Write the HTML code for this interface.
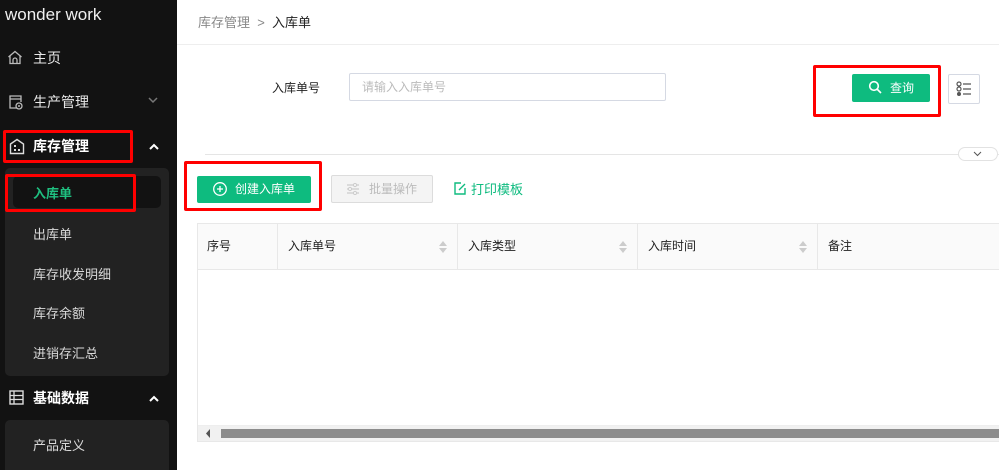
<!DOCTYPE html>
<html><head><meta charset="utf-8"><style>
*{box-sizing:border-box;margin:0;padding:0}
html,body{width:999px;height:470px;overflow:hidden}
body{position:relative;background:#fff;font-family:"Liberation Sans","Noto Sans CJK SC",sans-serif;font-size:13px}
.a{position:absolute}
.side{left:0;top:0;width:177px;height:470px;background:#121212;color:#d9d9d9;overflow:hidden}
.red{position:absolute;border:3px solid #f00;border-radius:2px}
.mi{position:absolute;left:33px;font-size:14px;color:#e8e8e8}
.si{position:absolute;left:33px;font-size:13px;color:#d9d9d9}
.th{position:absolute;top:224px;height:46px;border-left:1px solid #e8e8e8;line-height:45px;padding-left:10px;font-size:12px;color:#222}
.sort{position:absolute;top:17px;width:0;height:0;border-left:4px solid transparent;border-right:4px solid transparent}
</style></head><body>
<div class="a side">
  <div class="a" style="left:5px;top:5px;font-size:17px;color:#f0f0f0">wonder work</div>
  <svg class="a" style="left:7px;top:50px" width="16" height="15" viewBox="0 0 16 15"><path d="M1.5 7L8 1.5 14.5 7M3 5.8V13.5H13V5.8M6 13.5V10a2 2 0 014 0v3.5" fill="none" stroke="#bbb" stroke-width="1.3"/></svg>
  <div class="mi" style="top:48px">主页</div>
  <svg class="a" style="left:8px;top:94px" width="16" height="16" viewBox="0 0 16 16"><path d="M9 14H2V2h11v6M2 5h11" fill="none" stroke="#bbb" stroke-width="1.3"/><circle cx="11" cy="12" r="3" fill="none" stroke="#bbb" stroke-width="1.3"/><circle cx="11" cy="12" r="1" fill="#bbb"/></svg>
  <div class="mi" style="top:92px">生产管理</div>
  <svg class="a" style="left:148px;top:97px" width="10" height="7"><path d="M1 1l4 4 4-4" fill="none" stroke="#777" stroke-width="1.5"/></svg>
  <svg class="a" style="left:9px;top:138px" width="16" height="17" viewBox="0 0 16 17"><path d="M1.5 6L8 1.5 14.5 6V15.5H1.5Z" fill="none" stroke="#ddd" stroke-width="1.4"/><rect x="5" y="7" width="2" height="2" fill="#ddd"/><rect x="5" y="11" width="2" height="2" fill="#ddd"/><rect x="9" y="11" width="2" height="2" fill="#ddd"/></svg>
  <div class="mi" style="top:136px;font-weight:bold;color:#fff">库存管理</div>
  <svg class="a" style="left:149px;top:143px" width="10" height="7"><path d="M1 6l4-4 4 4" fill="none" stroke="#fff" stroke-width="2"/></svg>
  <div class="red" style="left:3px;top:130px;width:130px;height:33px"></div>
  <div class="a" style="left:5px;top:168px;width:164px;height:208px;background:#222;border-radius:5px"></div>
  <div class="a" style="left:13px;top:176px;width:148px;height:32px;background:#121212;border-radius:5px"></div>
  <div class="si" style="top:183px;color:#1fbf80;font-weight:bold">入库单</div>
  <div class="red" style="left:5px;top:174px;width:131px;height:38px"></div>
  <div class="si" style="top:224px">出库单</div>
  <div class="si" style="top:264px">库存收发明细</div>
  <div class="si" style="top:303px">库存余额</div>
  <div class="si" style="top:343px">进销存汇总</div>
  <svg class="a" style="left:9px;top:390px" width="15" height="15" viewBox="0 0 15 15"><rect x="1" y="1" width="13" height="13" fill="none" stroke="#ddd" stroke-width="1.4"/><path d="M1 5.5h13M1 9.5h13M5 1v13" stroke="#ddd" stroke-width="1.3"/></svg>
  <div class="mi" style="top:388px;font-weight:bold;color:#fff">基础数据</div>
  <svg class="a" style="left:149px;top:395px" width="10" height="7"><path d="M1 6l4-4 4 4" fill="none" stroke="#fff" stroke-width="2"/></svg>
  <div class="a" style="left:5px;top:420px;width:164px;height:60px;background:#222;border-radius:5px"></div>
  <div class="si" style="top:435px">产品定义</div>
</div>
<!-- header -->
<div class="a" style="left:177px;top:0;width:822px;height:45px;border-bottom:1px solid #eee"></div>
<div class="a" style="left:198px;top:12px;font-size:13px;color:#888">库存管理 &nbsp;&gt;&nbsp; <span style="color:#222">入库单</span></div>
<div class="a" style="left:272px;top:79px;font-size:12px;color:#222">入库单号</div>
<div class="a" style="left:349px;top:73px;width:317px;height:28px;border:1px solid #d5d9e3;border-radius:2px;padding-left:12px;line-height:26px;font-size:12px;color:#bbb">请输入入库单号</div>
<div class="a" style="left:852px;top:74px;width:78px;height:28px;background:#0ebb7f;border-radius:2px;color:#fff;font-size:12px;line-height:28px;padding-left:38px">查询</div>
<svg class="a" style="left:868px;top:80px" width="14" height="14"><circle cx="6" cy="6" r="4.3" fill="none" stroke="#fff" stroke-width="1.6"/><path d="M9 9l4 4" stroke="#fff" stroke-width="1.6"/></svg>
<div class="red" style="left:813px;top:65px;width:128px;height:52px"></div>
<div class="a" style="left:948px;top:74px;width:32px;height:30px;border:1px solid #d5d9e3;border-radius:2px"></div>
<svg class="a" style="left:956px;top:81px" width="16" height="16"><circle cx="3" cy="3" r="2" fill="none" stroke="#555" stroke-width="1.2"/><circle cx="3" cy="8" r="2" fill="none" stroke="#555" stroke-width="1.2"/><circle cx="3" cy="13" r="2" fill="#555"/><path d="M7 3h8M7 8h8M7 13h8" stroke="#555" stroke-width="1.3"/></svg>
<div class="a" style="left:205px;top:154px;width:794px;height:1px;background:#e5e5e5"></div>
<div class="a" style="left:958px;top:147px;width:40px;height:14px;border:1px solid #e2e2e2;border-radius:7px;background:#fff"></div>
<svg class="a" style="left:973px;top:151px" width="9" height="6"><path d="M1 1l3.5 3.5L8 1" fill="none" stroke="#555" stroke-width="1"/></svg>
<!-- actions -->
<div class="a" style="left:197px;top:176px;width:114px;height:27px;background:#0ebb7f;border-radius:2px;color:#fff;font-size:12px;line-height:27px;padding-left:38px">创建入库单</div>
<svg class="a" style="left:212px;top:181px" width="16" height="16"><circle cx="8" cy="8" r="6.3" fill="none" stroke="#fff" stroke-width="1.3"/><path d="M8 5v6M5 8h6" stroke="#fff" stroke-width="1.3"/></svg>
<div class="red" style="left:184px;top:161px;width:138px;height:50px"></div>
<div class="a" style="left:331px;top:175px;width:102px;height:28px;border:1px solid #dcdcdc;background:#f4f4f4;border-radius:2px;color:#bbb;font-size:12px;line-height:26px;padding-left:37px">批量操作</div>
<svg class="a" style="left:346px;top:183px" width="14" height="12"><path d="M1 2h12M1 6h12M1 10h12" stroke="#ccc" stroke-width="1.2"/><circle cx="9" cy="2" r="1.6" fill="#f4f4f4" stroke="#ccc"/><circle cx="4" cy="6" r="1.6" fill="#f4f4f4" stroke="#ccc"/><circle cx="9" cy="10" r="1.6" fill="#f4f4f4" stroke="#ccc"/></svg>
<svg class="a" style="left:454px;top:182px" width="12" height="13"><path d="M7 1H1v11h10V6M5 8l6-6" fill="none" stroke="#0ebb7f" stroke-width="1.4"/></svg>
<div class="a" style="left:471px;top:179px;font-size:13px;color:#0ebb7f">打印模板</div>
<!-- table -->
<div class="a" style="left:197px;top:223px;width:802px;height:219px;border:1px solid #e8e8e8;border-right:none"></div>
<div class="a" style="left:198px;top:224px;width:801px;height:46px;background:#fafafa;border-bottom:1px solid #e8e8e8"></div>
<div class="th" style="left:197px;width:80px;border-left:none">序号</div>
<div class="th" style="left:277px;width:180px">入库单号<span class="sort" style="left:161px;border-bottom:5px solid #ccc"></span><span class="sort" style="left:161px;top:24px;border-top:5px solid #ccc"></span></div>
<div class="th" style="left:457px;width:180px">入库类型<span class="sort" style="left:161px;border-bottom:5px solid #ccc"></span><span class="sort" style="left:161px;top:24px;border-top:5px solid #ccc"></span></div>
<div class="th" style="left:637px;width:180px">入库时间<span class="sort" style="left:161px;border-bottom:5px solid #ccc"></span><span class="sort" style="left:161px;top:24px;border-top:5px solid #ccc"></span></div>
<div class="th" style="left:817px;width:182px">备注</div>
<div class="a" style="left:198px;top:425px;width:801px;height:1px;background:#eee"></div>
<div class="a" style="left:198px;top:426px;width:801px;height:15px;background:#f1f1f1"></div>
<div class="a" style="left:221px;top:429px;width:778px;height:9px;background:#8c8c8c"></div>
<svg class="a" style="left:205px;top:429px" width="6" height="9"><path d="M5 0L1 4.5 5 9Z" fill="#555"/></svg>
</body></html>
